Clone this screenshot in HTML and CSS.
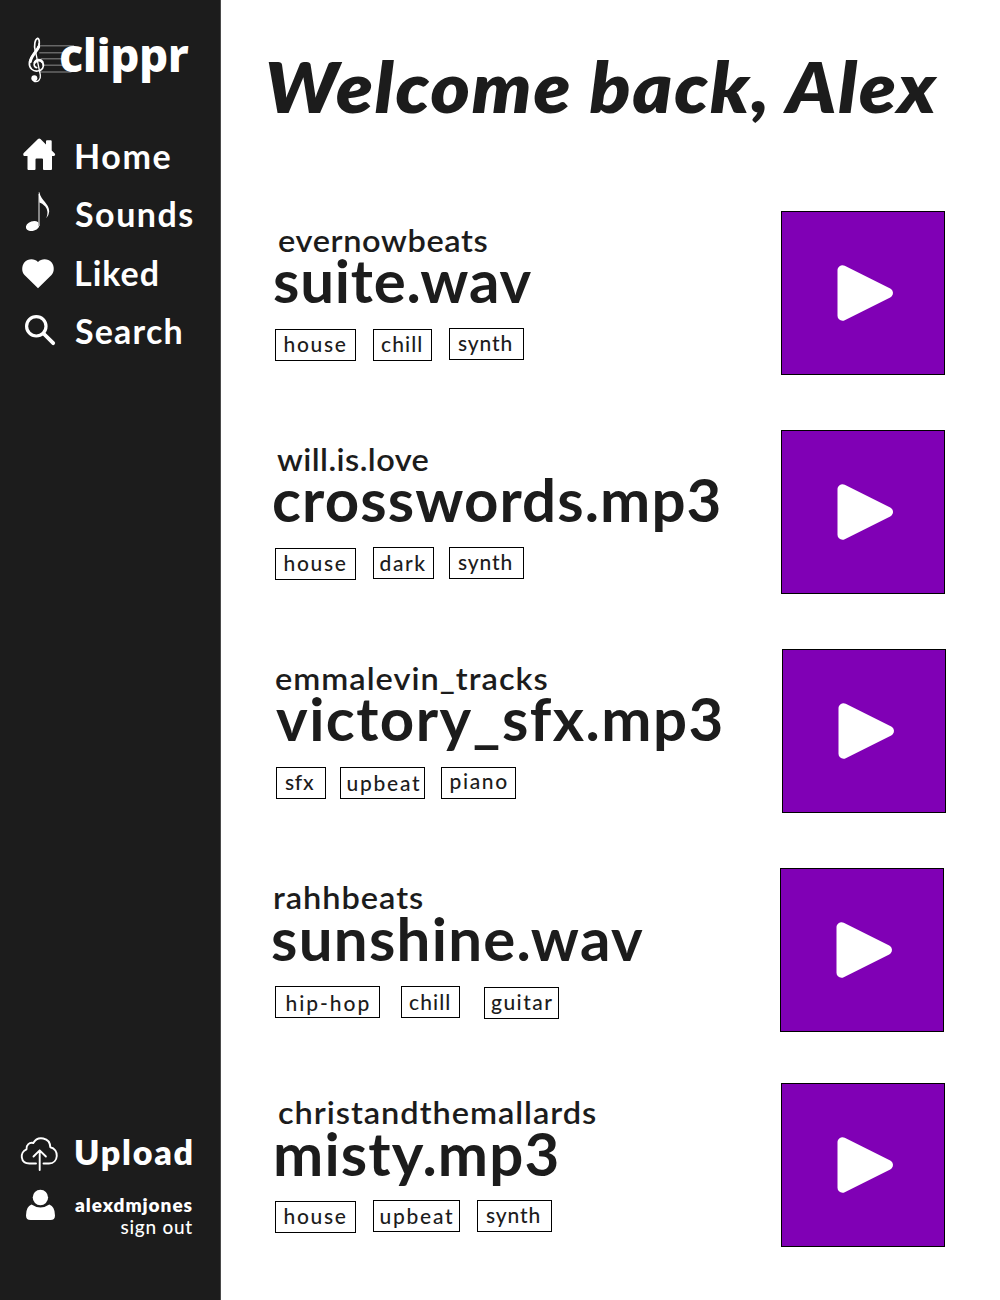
FILE: index.html
```html
<!DOCTYPE html>
<html lang="en">
<head>
<meta charset="utf-8">
<title>clippr</title>
<link rel="stylesheet" href="styles.css">
</head>
<body>
<svg width="0" height="0" class="defs" aria-hidden="true">
  <symbol id="play" viewBox="0 0 162 162">
    <path d="M60.500 58.300V103.700L106 81Z" fill="#fff" stroke="#fff" stroke-width="10" stroke-linejoin="round"/>
  </symbol>
</svg>
<div class="app">
  <aside class="sidebar">
    <div class="logo">
      <svg class="logo-mark" width="50" height="50" viewBox="80 44 150 150" fill="none" stroke="#fff" stroke-linecap="round">
        <path d="M118 76.500H220M118 97.500H200M122 115.500H190M130 134.500H190M118 155H212" stroke="#8c8c8c" stroke-width="3"/>
        <path d="M105 92C100 74 104 57 112 54C118 56 119 72 112 86" stroke-width="5"/>
        <path d="M117 70C115 92 89 106 87 128C86 144 99 154 112 152C126 151 131 140 129 131" stroke-width="5"/>
        <path d="M115 80C109 94 92 106 90 124" stroke-width="9"/>
        <path d="M129 135C128 117 106 114 102 128C100 136 104 141 109 142" stroke-width="5"/>
        <path d="M126 125C120 117 109 118 104 126" stroke-width="8"/>
        <path d="M105 90L120 164C122 178 112 187 101 183" stroke-width="4"/>
        <circle cx="102" cy="174" r="9" fill="#fff" stroke="none"/>
      </svg>
      <span class="logo-text">clippr</span>
    </div>
    <nav class="nav">
      <a class="nav-item home">
        <svg width="40" height="58" viewBox="20 126 40 58" fill="#fff"><path d="M38 139L23.500 153.200Q22.500 156 25 156H27.500V169Q27.500 170 28.500 170H34.500Q35.500 170 35.500 169V159.500Q35.500 158.500 36.500 158.500H42Q43 158.500 43 159.500V169Q43 170 44 170H51Q52 170 52 169V156H54Q56 155 54.500 153.200L51.700 150.500V141.300Q51.700 140.300 50.700 140.300H47Q46 140.300 46 141.300V144.500L40.500 139Q39.200 137.800 38 139Z"/></svg>
        <span>Home</span>
      </a>
      <a class="nav-item sounds">
        <svg width="40" height="58" viewBox="20 184 40 58" fill="#fff"><ellipse cx="32.700" cy="226" rx="7" ry="4.700" transform="rotate(-18 32.700 226)"/><path d="M39 194V226" stroke="#aaa" stroke-width="1.500"/><path d="M38.700 192.300H39.400C41 201 49.300 203.500 49.200 211.500Q49 215 46.300 218.300Q49 211 45.300 206.500Q42 203 39.400 202.500Z"/></svg>
        <span>Sounds</span>
      </a>
      <a class="nav-item liked">
        <svg width="40" height="58" viewBox="20 243 40 58" fill="#fff"><path d="M38 288.300L24.500 275C21.500 272 21.500 266 24.300 262.500C28 258.300 34.500 258.300 38 262C41.500 258.300 48 258.300 51.700 262.500C54.500 266 54.500 272 51.500 275Z"/></svg>
        <span>Liked</span>
      </a>
      <a class="nav-item search">
        <svg width="40" height="58" viewBox="20 301 40 58" fill="none" stroke="#fff" stroke-linecap="round"><circle cx="36.300" cy="326.300" r="9.700" stroke-width="3.200"/><path d="M44 334L53.200 343.200" stroke-width="3.800"/></svg>
        <span>Search</span>
      </a>
    </nav>
    <div class="account">
      <a class="nav-item upload">
        <svg width="40" height="58" viewBox="20 1122 40 58" fill="none" stroke="#fff" stroke-width="1.900" stroke-linecap="round" stroke-linejoin="round"><path d="M36 1163.500H29.500C20 1163.500 19.500 1152 26.500 1149.300C26 1145 29.500 1142 33.300 1143C37.500 1135.500 50 1137 50.300 1147.300C59.500 1149 58.800 1163.500 49 1163.500H43.500M39.700 1170V1150.500M33.500 1156.500L39.700 1150.300L45.900 1156.500"/></svg>
        <span>Upload</span>
      </a>
      <div class="user">
        <svg width="40" height="40" viewBox="20 1184 40 40" fill="#fff"><circle cx="40.400" cy="1197.500" r="7.700"/><path d="M31.500 1204.500Q40.500 1210.500 49.300 1204.500Q55 1206.500 55 1215.500Q55 1220 50.500 1220H30.500Q26 1220 26 1215.500Q26 1206.500 31.500 1204.500Z"/></svg>
        <div class="user-text">
          <span class="user-name">alexdmjones</span>
          <a class="sign-out">sign out</a>
        </div>
      </div>
    </div>
  </aside>
  <main class="main">
    <h1>Welcome back, Alex</h1>
    <article class="track suite">
      <div class="info">
        <p class="artist">evernowbeats</p>
        <h2>suite.wav</h2>
        <div class="tags"><span class="tag house">house</span><span class="tag chill">chill</span><span class="tag synth">synth</span></div>
      </div>
      <button class="play"><svg width="162" height="162"><use href="#play"/></svg></button>
    </article>
    <article class="track crosswords">
      <div class="info">
        <p class="artist">will.is.love</p>
        <h2>crosswords.mp3</h2>
        <div class="tags"><span class="tag house">house</span><span class="tag dark">dark</span><span class="tag synth">synth</span></div>
      </div>
      <button class="play"><svg width="162" height="162"><use href="#play"/></svg></button>
    </article>
    <article class="track victory">
      <div class="info">
        <p class="artist">emmalevin_tracks</p>
        <h2>victory_sfx.mp3</h2>
        <div class="tags"><span class="tag sfx">sfx</span><span class="tag upbeat">upbeat</span><span class="tag piano">piano</span></div>
      </div>
      <button class="play"><svg width="162" height="162"><use href="#play"/></svg></button>
    </article>
    <article class="track sunshine">
      <div class="info">
        <p class="artist">rahhbeats</p>
        <h2>sunshine.wav</h2>
        <div class="tags"><span class="tag hiphop">hip-hop</span><span class="tag chill">chill</span><span class="tag guitar">guitar</span></div>
      </div>
      <button class="play"><svg width="162" height="162"><use href="#play"/></svg></button>
    </article>
    <article class="track misty">
      <div class="info">
        <p class="artist">christandthemallards</p>
        <h2>misty.mp3</h2>
        <div class="tags"><span class="tag house">house</span><span class="tag upbeat">upbeat</span><span class="tag synth">synth</span></div>
      </div>
      <button class="play"><svg width="162" height="162"><use href="#play"/></svg></button>
    </article>
  </main>
</div>
</body>
</html>
```
FILE: styles.css
```css
* { box-sizing: border-box; }
body { margin: 0; background: #fff; color: #1c1c1c; font-family: Lato, "Open Sans", sans-serif; }
h1, h2, p { margin: 0; white-space: nowrap; }
svg { display: block; flex: none; }
.defs { position: absolute; }
.app { display: flex; height: 1300px; overflow: hidden; }

/* Sidebar */
.sidebar { width: 221px; flex: none; display: flex; flex-direction: column; background: #1c1c1c; border-right: 1px solid #4a4a4a; color: #fff; padding: 24px 0 65px 20px; }
.logo { display: flex; height: 58px; padding-left: 7px; }
.logo-mark { margin-top: 11px; }
.logo-text { margin-left: -18px; font: 800 46px/60px "Noto Sans", sans-serif; letter-spacing: -0.5px; }
.nav { margin-top: 44px; }
.nav-item { display: flex; height: 58px; font-size: 34px; line-height: 60px; font-weight: 700; }
.nav-item span { margin-left: 15px; }
.home span { margin-left: 14px; letter-spacing: 1.6px; }
.sounds span { letter-spacing: 1.5px; }
.liked { margin-top: 1px; }
.liked span { margin-left: 14px; letter-spacing: 1px; }
.search span { letter-spacing: 1.18px; }
.account { margin-top: auto; }
.upload { font-weight: 800; line-height: 59px; }
.upload span { margin-left: 14px; letter-spacing: 1.8px; }
.user { display: flex; height: 55px; padding-top: 4px; }
.user-text { width: 133px; display: flex; flex-direction: column; align-items: flex-end; }
.user-name { margin-top: 10px; font-size: 19px; line-height: 22px; font-weight: 800; letter-spacing: 0.95px; }
.sign-out { font-size: 19px; line-height: 22px; font-weight: 500; letter-spacing: 0.75px; }

/* Feed */
.main { flex: 1; padding: 44px 0 0 50px; }
h1 { margin: 0 0 83px -6px; font-size: 70px; line-height: 84px; font-weight: 800; font-style: italic; letter-spacing: 1.75px; transform: scaleX(1.07); transform-origin: left; }
.track { display: grid; grid-template-columns: 510px 164px; height: 164px; margin-bottom: 55px; }
.info { padding-top: 16px; }
.artist { font-size: 31px; line-height: 26px; font-weight: 600; transform: scaleX(1.05); transform-origin: left; }
h2 { font-size: 60px; line-height: 54px; height: 54px; font-weight: 700; }
.play { width: 164px; height: 164px; padding: 0; border: 1px solid #000; background: #8000b5; }

.suite .artist { margin-left: 7px; letter-spacing: 0.58px; }
.suite h2 { margin-left: 2px; letter-spacing: 0.8px; }
.crosswords .artist { margin-left: 6px; letter-spacing: 0.41px; }
.crosswords h2 { margin-left: 1px; letter-spacing: 1.1px; }
.victory .artist { margin-left: 3.5px; letter-spacing: 0.95px; }
.victory h2 { margin-left: 5px; letter-spacing: 1.45px; }
.victory .play { margin-left: 1px; }
.sunshine { margin-bottom: 51px; }
.sunshine .artist { margin-left: 2px; letter-spacing: 0.92px; }
.sunshine h2 { margin-left: 0; padding-top: 1px; letter-spacing: 1.28px; }
.sunshine .play { margin-left: -1px; }
.misty .artist { margin-left: 7px; letter-spacing: 0.91px; }
.misty h2 { margin-left: 2px; padding-top: 1px; letter-spacing: 1.15px; }

/* Tags */
.tags { display: flex; align-items: flex-start; margin: 21px 0 0 4px; padding-top: 1px; }
.tag { height: 32px; border: 1px solid #000; font-size: 21px; line-height: 28px; font-weight: 500; white-space: nowrap; }
.house { width: 81px; padding-left: 7.5px; letter-spacing: 1.65px; }
.chill { width: 59px; padding-left: 7px; letter-spacing: 1.1px; }
.synth { width: 75px; padding-left: 8px; letter-spacing: 0.9px; }
.dark { width: 61px; padding-left: 5.5px; letter-spacing: 1.6px; }
.sfx { width: 50px; padding-left: 8px; letter-spacing: 0.7px; }
.upbeat { width: 87px; padding-left: 5.5px; letter-spacing: 1.75px; }
.piano { width: 75px; padding-left: 7.5px; letter-spacing: 1.65px; }
.hiphop { width: 105px; padding-left: 9.5px; letter-spacing: 1.95px; }
.guitar { width: 75px; padding-left: 6px; letter-spacing: 1.45px; }

.suite .chill, .crosswords .dark, .misty .upbeat { margin-left: 17px; }
.suite .synth { margin: -1px 0 0 17px; }
.crosswords .dark { margin-top: -1px; line-height: 30px; }
.crosswords .synth { margin: -1px 0 0 15px; }
.victory .tags { margin-left: 5px; }
.victory .upbeat { width: 85px; margin-left: 14px; line-height: 30px; }
.victory .piano { margin-left: 16px; line-height: 26px; }
.sunshine .hiphop { line-height: 32px; }
.sunshine .chill { margin-left: 21px; line-height: 30px; }
.sunshine .guitar { margin: 1px 0 0 24px; }
.misty .upbeat { margin-top: -1px; line-height: 30px; }
.misty .synth { margin: -1px 0 0 17px; }
```
